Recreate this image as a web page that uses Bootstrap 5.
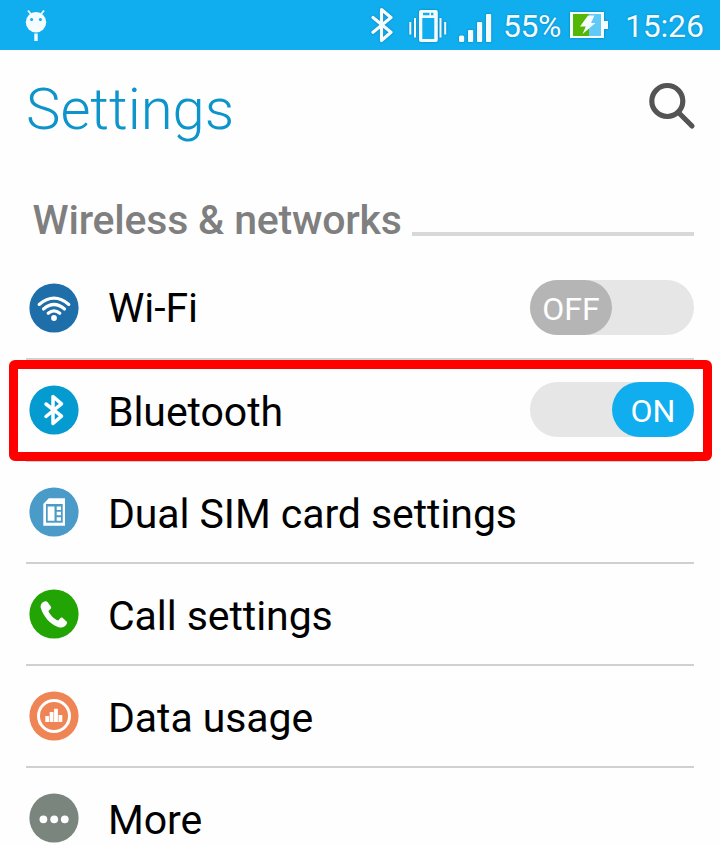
<!DOCTYPE html>
<html lang="en">
<head>
<meta charset="utf-8">
<meta name="viewport" content="width=device-width, initial-scale=1">
<title>Settings</title>
<link href="https://cdn.jsdelivr.net/npm/bootstrap@5.3.0/dist/css/bootstrap.min.css" rel="stylesheet">
<style>
body{font-family:Roboto,"Liberation Sans",sans-serif;background:#fefefe;overflow:hidden;height:845px}
svg{display:block;flex:none}
.status-bar{height:50px;background:#10aeef;color:#f4fbff;padding:0 16px 0 22px;font-size:32px;line-height:50px}
.status-bar span{padding-top:1px;text-shadow:0 0 2px #0878ad}
.status-icons svg{filter:drop-shadow(0 0 .8px #0b79ad)}
.pct{margin-left:10px;width:60px;letter-spacing:-.5px}
.batt{margin-left:7px}
.clock{margin-left:16px;width:79px;letter-spacing:-.2px}
.title-bar{height:113px;padding:0 23px 0 26px}
.title-bar h1{font-size:58px;font-weight:300;line-height:68px;color:#0d94cb;padding-top:5px}
.title-bar svg{margin-bottom:1px}
.section-head{height:95px;padding:33px 26px 0 32.500px}
.section-head h2{font-size:41px;font-weight:500;line-height:48px;letter-spacing:-.2px;color:#7f7f7f}
.section-rule{height:4px;background:#d7d8da;margin-left:10px;margin-top:36px}
.setting{height:102px;margin:0 26px;border-bottom:2px solid #d0d0d0;font-size:41px;line-height:48px;color:#000}
.setting>svg{margin-left:3px}
.label{margin-left:29px;padding-top:4px;letter-spacing:-.07px}
.label-first{padding-top:0}
.switch{width:164px;height:55px;margin-bottom:1px;background:#e6e6e6}
.knob{width:82px;height:55px;font-size:32px;line-height:58px;color:#fff}
.knob-off{background:#b5b5b5}
.knob-on{background:#10aeef}
.highlight{left:-17.5px;right:-17.5px;top:0;height:101px;border:9px solid #f00;border-radius:6px}
</style>
</head>
<body>
<header class="status-bar d-flex align-items-center justify-content-between">
  <svg width="28" height="50" viewBox="22 0 28 50" fill="#f5fcff"><path d="M28 10.5l4 5M44 10.5l-4 5" stroke="#f5fcff" stroke-width="1.8"/><circle cx="36" cy="22.2" r="10.2"/><path d="M34.3 33.5h3.4V41h-3.4z"/><g fill="#10aeef"><circle cx="31.6" cy="19.4" r="1.5"/><circle cx="40.4" cy="19.4" r="1.5"/></g></svg>
  <div class="status-icons d-flex align-items-center">
    <svg width="125" height="50" viewBox="368 0 125 50" fill="none" stroke="#f5fcff">
      <path d="M373 17.500l18 14.700-9.500 8.300V9.500l9.500 8-18 14.700" stroke-width="3.200" stroke-linejoin="round" stroke-linecap="round"/>
      <path d="M410.300 22v12.500M415 18v19.500M440.500 18v19.500M445.200 22v12.500" stroke-width="2"/>
      <rect x="419" y="10" width="18.800" height="32" rx="2" fill="#f5fcff" stroke="none"/>
      <path d="M422.300 18h12v21h-12zM423 12.800h6.500v2.400H423zM431 12.800h2.400v2.400H431z" fill="#10aeef" stroke="none"/>
      <g fill="#f5fcff" stroke="none"><rect x="459" y="35.500" width="5.200" height="6.500" rx="1.500"/><rect x="468" y="30" width="5.200" height="12" rx="1"/><rect x="477" y="22" width="5.200" height="20" rx="1"/><rect x="486" y="14" width="5.200" height="28" rx="1"/></g>
    </svg>
    <span class="pct text-nowrap">55%</span>
    <svg class="batt" width="39" height="50" viewBox="570 0 39 50"><path d="M570 12h34v9h4v8h-4v9h-34z" fill="#f5fcff"/><path d="M573 14h16v22h-16z" fill="#55b705"/><path d="M589 14h12v22h-12z" fill="#60c9f5"/><path d="M588 15.500h6.500L591 23h4.500L582.500 34l3.300-7.500H580z" fill="#f5fcff"/></svg>
    <span class="clock text-nowrap">15:26</span>
  </div>
</header>

<div class="title-bar d-flex align-items-center justify-content-between">
  <h1 class="mb-0">Settings</h1>
  <svg width="50" height="50" viewBox="647 81 50 50" fill="none" stroke="#545454"><circle cx="667.300" cy="101" r="15.500" stroke-width="5.200"/><path d="M679 113l13 13" stroke-width="5.200" stroke-linecap="round"/></svg>
</div>

<main>
  <div class="section-head d-flex">
    <h2 class="mb-0 text-nowrap">Wireless &amp; networks</h2>
    <div class="section-rule flex-grow-1"></div>
  </div>

  <div class="setting d-flex align-items-center">
    <svg width="50" height="50" viewBox="-25 -25 50 50"><circle r="24.600" fill="#1d6ea9"/><g fill="none" stroke="#fff" stroke-width="3.200" stroke-linecap="round"><path d="M-14.800-3.600Q0-16 14.800-3.600M-10.500 1Q0-8 10.500 1M-5.800 5.300Q0 .3 5.800 5.300"/></g><circle cy="10" r="2.900" fill="#fff"/></svg>
    <div class="label label-first">Wi-Fi</div>
    <div class="switch rounded-pill ms-auto d-flex"><div class="knob knob-off rounded-pill text-center">OFF</div></div>
  </div>

  <div class="setting d-flex align-items-center position-relative">
    <svg width="50" height="50" viewBox="-25 -25 50 50"><circle r="24.600" fill="#049bd0"/><path d="M-8-6L7.500 6.200-1 13.500V-13.500L7.500-6.200-8 6.500" fill="none" stroke="#fff" stroke-width="3.500" stroke-linejoin="round" stroke-linecap="round"/></svg>
    <div class="label">Bluetooth</div>
    <div class="switch rounded-pill ms-auto d-flex justify-content-end"><div class="knob knob-on rounded-pill text-center">ON</div></div>
    <div class="highlight position-absolute"></div>
  </div>

  <div class="setting d-flex align-items-center">
    <svg width="50" height="50" viewBox="-25 -25 50 50"><circle r="24.600" fill="#4b9bc9"/><path d="M-10.700-8l5.500-5.700H11v27.400h-21.700z" fill="#fff"/><path d="M-8-8H8.700v18.700H-8z" fill="#4b9bc9"/><path d="M-6.300-5.500H.5V8.700h-6.800zM2.700-5.500H7v3.500H2.700zM2.700-.2H7v3.500H2.700zM2.700 5.200H7v3.500H2.700z" fill="#fff"/></svg>
    <div class="label">Dual SIM card settings</div>
  </div>

  <div class="setting d-flex align-items-center">
    <svg width="50" height="50" viewBox="-25 -25 50 50"><circle r="24.600" fill="#21a404"/><path d="M-9.500-12.500C-12.500-11.500-14.200-8.500-13-5.500-10.500 2.500-4 10 4 13c4 1.600 8-.3 9-4 .2-.8-.1-1.400-.8-1.800L8.800 4c-.9-.6-1.900-.5-2.600.2L4.300 6.600C0 5-4 1-5.600-3L-3.300-5.200c.6-.7.6-1.500.1-2.300L-6.500-12c-.8-1-1.900-.9-3-.5z" fill="#fff"/></svg>
    <div class="label">Call settings</div>
  </div>

  <div class="setting d-flex align-items-center">
    <svg width="50" height="50" viewBox="-25 -25 50 50"><circle r="24.600" fill="#ef8454"/><circle r="15.500" fill="none" stroke="#fff" stroke-width="3"/><path d="M-8.700 0h3.800v6h-3.800zM-4.300-4h3.800V6h-3.800zM.1-7.200h3.800V6H.1zM4.500-1h3.800v7H4.500z" fill="#fff"/></svg>
    <div class="label">Data usage</div>
  </div>

  <div class="setting d-flex align-items-center">
    <svg width="50" height="50" viewBox="-25 -25 50 50"><circle r="24.600" fill="#7a857d"/><g fill="#fff"><circle cx="-10.600" cy="1.300" r="3.900"/><circle cx=".2" cy="1.300" r="3.900"/><circle cx="10.800" cy="1.300" r="3.900"/></g></svg>
    <div class="label">More</div>
  </div>
</main>
<script src="https://cdn.jsdelivr.net/npm/bootstrap@5.3.0/dist/js/bootstrap.bundle.min.js"></script>
</body>
</html>
